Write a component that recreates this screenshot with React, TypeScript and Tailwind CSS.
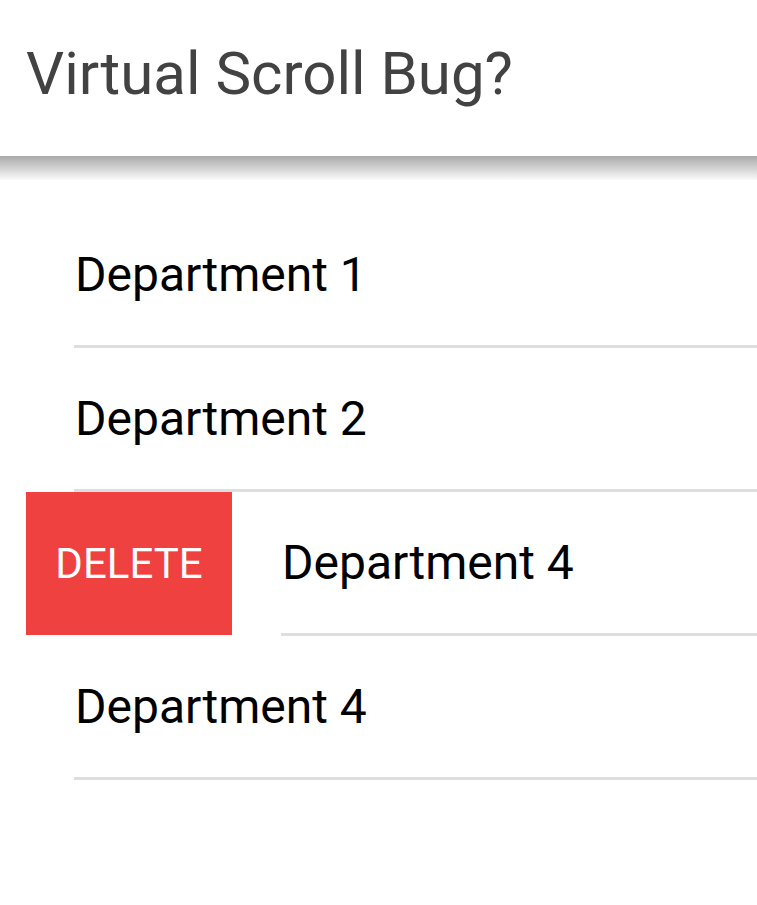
const items = ['Department 1', 'Department 2'];

function Row({ label }: { label: string }) {
  return (
    <div className="pl-[74px]">
      <div className="flex h-[144px] items-center border-b-[3px] border-[#dedede] pl-px">
        <span className="text-[48px] text-black">{label}</span>
      </div>
    </div>
  );
}

export default function App() {
  return (
    <div className="min-h-[905px] bg-white font-['Roboto',sans-serif]">
      <header className="flex h-[156px] items-center bg-white pb-[8px] pl-[26px]">
        <h1 className="text-[60px] font-normal text-[#424242]">Virtual Scroll Bug?</h1>
      </header>
      <div className="h-[24px] bg-gradient-to-b from-[#aaaaaa] to-[#fafafa]" />
      <div className="pt-[24px]">
        {items.map((label) => (
          <Row key={label} label={label} />
        ))}
        <div className="relative h-[144px] overflow-hidden">
          <button className="absolute left-[26px] top-0 flex h-[143px] w-[206px] items-center justify-center bg-[#f04141] text-[42px] uppercase text-white">
            Delete
          </button>
          <div className="ml-[281px] flex h-full items-center border-b-[3px] border-[#dedede] pl-px">
            <span className="text-[48px] text-black">Department 4</span>
          </div>
        </div>
        <Row label="Department 4" />
      </div>
    </div>
  );
}
